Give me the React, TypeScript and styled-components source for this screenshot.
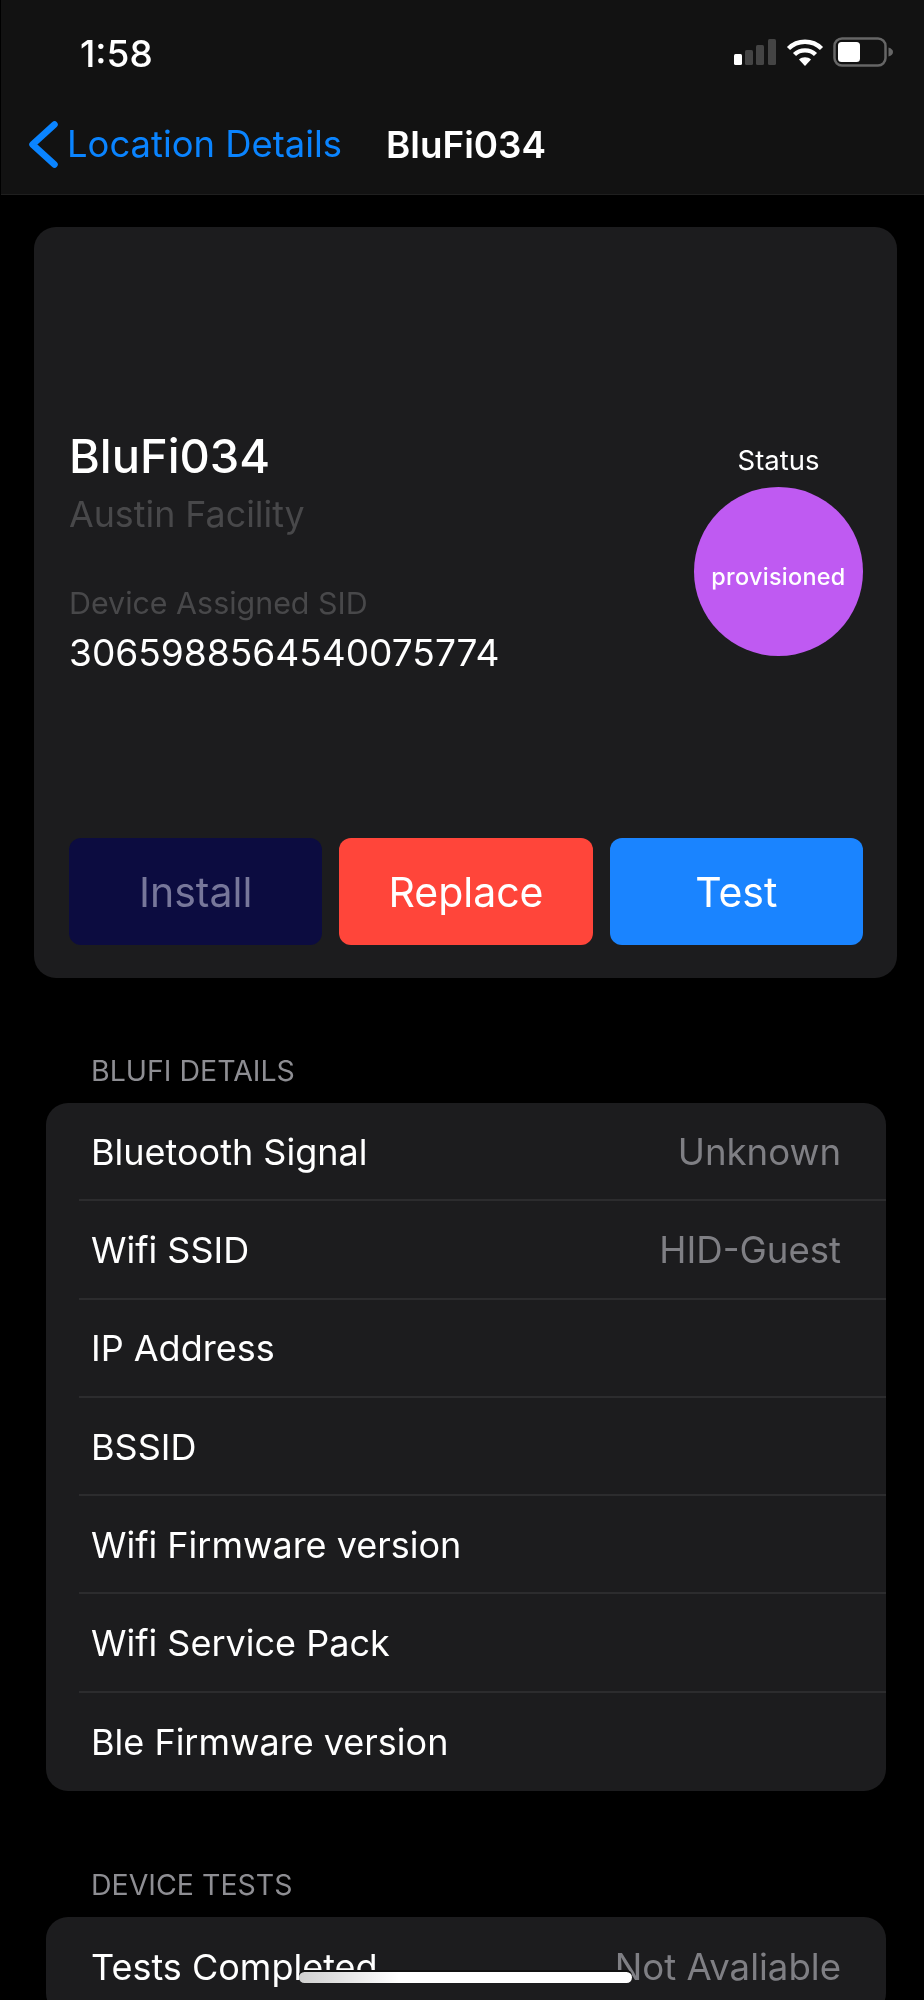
import React from "react";
import styled, { createGlobalStyle } from "styled-components";

const Global = createGlobalStyle`
  html, body { margin: 0; padding: 0; background: #000; }
  * { box-sizing: border-box; }
`;

const Screen = styled.div`
  width: 924px;
  height: 2000px;
  position: relative;
  overflow: hidden;
  background: #000;
  padding-left: 1px;
  font-family: Inter, "Liberation Sans", sans-serif;
  color: #fff;
  filter: blur(0.5px);
`;

const Header = styled.header`
  height: 195px;
  background: #121212;
  border-bottom: 1px solid #1f1f1f;
`;

const StatusBar = styled.div`
  height: 106px;
  display: flex;
  justify-content: space-between;
  align-items: flex-start;
  padding: 32px 30px 0 79px;
`;

const Time = styled.span`
  font-size: 37px;
  line-height: 44px;
  font-weight: 500;
`;

const StatusIcons = styled.div`
  display: flex;
  align-items: center;
  padding-top: 5px;
  gap: 9px;
`;

const NavRow = styled.nav`
  display: flex;
  align-items: center;
  height: 76px;
  padding-left: 28px;
`;

const BackLabel = styled.span`
  margin-left: 9px;
  font-size: 36.4px;
  color: #0a84ff;
`;

const NavTitle = styled.span`
  margin-left: 44px;
  font-size: 36.8px;
  font-weight: 600;
`;

const Content = styled.main`
  display: flex;
  flex-direction: column;
  padding: 32px 27px 0 33px;
`;

const HeroCard = styled.section`
  height: 751px;
  background: #1c1c1e;
  border-radius: 22px;
  padding: 0 34px 0 35px;
  display: flex;
  flex-direction: column;
`;

const HeroMain = styled.div`
  display: flex;
  justify-content: space-between;
  padding-top: 201px;
  height: 611px;
`;

const HeroInfo = styled.div`
  display: flex;
  flex-direction: column;
`;

const DeviceName = styled.h1`
  margin: 0;
  font-size: 47px;
  line-height: 56px;
  font-weight: 500;
`;

const Facility = styled.div`
  margin-top: 8px;
  font-size: 35.8px;
  line-height: 44px;
  color: #48484a;
`;

const SidLabel = styled.div`
  margin-top: 49px;
  font-size: 30.4px;
  line-height: 36px;
  color: #48484a;
`;

const SidValue = styled.div`
  margin-top: 10px;
  font-size: 37.1px;
  line-height: 44px;
`;

const StatusBlock = styled.div`
  display: flex;
  flex-direction: column;
  align-items: center;
  padding-top: 16px;
`;

const StatusLabel = styled.div`
  font-size: 27.5px;
  line-height: 32px;
`;

const StatusCircle = styled.div`
  margin-top: 11px;
  width: 169px;
  height: 169px;
  border-radius: 50%;
  background: #bf5af2;
  display: flex;
  align-items: center;
  justify-content: center;
  font-size: 23.4px;
  font-weight: 500;
  letter-spacing: 0.3px;
  padding-top: 10px;
`;

const ButtonRow = styled.div`
  display: grid;
  grid-template-columns: repeat(3, 1fr);
  gap: 17px;
`;

const ActionButton = styled.button<{ $bg: string; $fg: string }>`
  height: 107px;
  border: 0;
  border-radius: 12px;
  background: ${(p) => p.$bg};
  color: ${(p) => p.$fg};
  font-family: inherit;
  font-size: 41px;
  font-weight: 400;
  padding: 0;
`;

const SectionTitle = styled.h2<{ $top: number }>`
  margin: ${(p) => p.$top}px 0 0 57px;
  font-size: 28.5px;
  line-height: 32px;
  font-weight: 400;
  color: #8e8e93;
  text-transform: uppercase;
`;

const ListCard = styled.section`
  margin: 16px 11px 0 12px;
  background: #1c1c1e;
  border-radius: 22px;
  overflow: hidden;
  flex-shrink: 0;
`;

const Row = styled.div`
  position: relative;
  height: 98.3px;
  display: flex;
  align-items: center;
  justify-content: space-between;
  margin-left: 33px;
  padding: 1px 45px 0 12px;
  font-size: 36px;
  border-bottom: 2px solid #2c2c2e;
  &:last-child { border-bottom: 0; }
`;

const RowValue = styled.span`
  color: #7f7f84;
  font-size: 36.6px;
`;

const HomeIndicator = styled.div`
  position: absolute;
  left: 299px;
  top: 1972px;
  width: 333px;
  height: 11px;
  border-radius: 6px;
  background: linear-gradient(90deg, #cfcfcf 0%, #fff 30%, #fff 100%);
  box-shadow: 0 -2px 0 #111;
`;

const SignalIcon = () => (
  <svg width="44" height="28" viewBox="0 0 44 28">
    <rect x="1" y="16" width="8" height="11" rx="1.5" fill="#fff" />
    <rect x="12" y="12" width="8" height="15" rx="1.5" fill="#444" />
    <rect x="23" y="7" width="8" height="20" rx="1.5" fill="#444" />
    <rect x="35" y="1" width="8" height="26" rx="1.5" fill="#444" />
  </svg>
);

const WifiIcon = () => (
  <svg width="38" height="28" viewBox="0 0 38 28" fill="none" stroke="#fff" strokeWidth="4.4">
    <path d="M2.5 10.5C11.5 1.5 26.5 1.5 35.5 10.5" />
    <path d="M8.5 16.5C14 11 24 11 29.5 16.5" />
    <path d="M19 28l-6-6.5c3-3 9-3 12 0z" fill="#fff" stroke="none" />
  </svg>
);

const BatteryIcon = () => (
  <svg width="61" height="30" viewBox="0 0 61 30">
    <rect x="1.5" y="1.5" width="51" height="27" rx="7.5" fill="none" stroke="#666" strokeWidth="2.5" />
    <rect x="5" y="5" width="22" height="20" rx="3.5" fill="#fff" />
    <path d="M55.5 10.5c3 1 4.5 2.5 4.5 4.5s-1.500 3.500-4.500 4.500z" fill="#666" />
  </svg>
);

const BackChevron = () => (
  <svg width="29" height="47" viewBox="0 0 29 47" fill="none" stroke="#0a84ff" strokeWidth="6.5" strokeLinecap="round" strokeLinejoin="round">
    <path d="M25.5 3.500L3.500 23.500L25.500 43.500" />
  </svg>
);

const details: [string, string?][] = [
  ["Bluetooth Signal", "Unknown"],
  ["Wifi SSID", "HID-Guest"],
  ["IP Address"],
  ["BSSID"],
  ["Wifi Firmware version"],
  ["Wifi Service Pack"],
  ["Ble Firmware version"],
];

export default function App() {
  return (
    <Screen>
      <Global />
      <Header>
        <StatusBar>
          <Time>1:58</Time>
          <StatusIcons>
            <SignalIcon />
            <WifiIcon />
            <BatteryIcon />
          </StatusIcons>
        </StatusBar>
        <NavRow>
          <BackChevron />
          <BackLabel>Location Details</BackLabel>
          <NavTitle>BluFi034</NavTitle>
        </NavRow>
      </Header>
      <Content>
        <HeroCard>
          <HeroMain>
            <HeroInfo>
              <DeviceName>BluFi034</DeviceName>
              <Facility>Austin Facility</Facility>
              <SidLabel>Device Assigned SID</SidLabel>
              <SidValue>3065988564540075774</SidValue>
            </HeroInfo>
            <StatusBlock>
              <StatusLabel>Status</StatusLabel>
              <StatusCircle>provisioned</StatusCircle>
            </StatusBlock>
          </HeroMain>
          <ButtonRow>
            <ActionButton $bg="#0c0c40" $fg="#77779a">Install</ActionButton>
            <ActionButton $bg="#ff453a" $fg="#fff">Replace</ActionButton>
            <ActionButton $bg="#1a84ff" $fg="#fff">Test</ActionButton>
          </ButtonRow>
        </HeroCard>
        <SectionTitle $top={77}>BluFi Details</SectionTitle>
        <ListCard>
          {details.map(([label, value]) => (
            <Row key={label}>
              <span>{label}</span>
              {value && <RowValue>{value}</RowValue>}
            </Row>
          ))}
        </ListCard>
        <SectionTitle $top={78}>Device Tests</SectionTitle>
        <ListCard>
          <Row>
            <span>Tests Completed</span>
            <RowValue>Not Avaliable</RowValue>
          </Row>
        </ListCard>
      </Content>
      <HomeIndicator />
    </Screen>
  );
}
